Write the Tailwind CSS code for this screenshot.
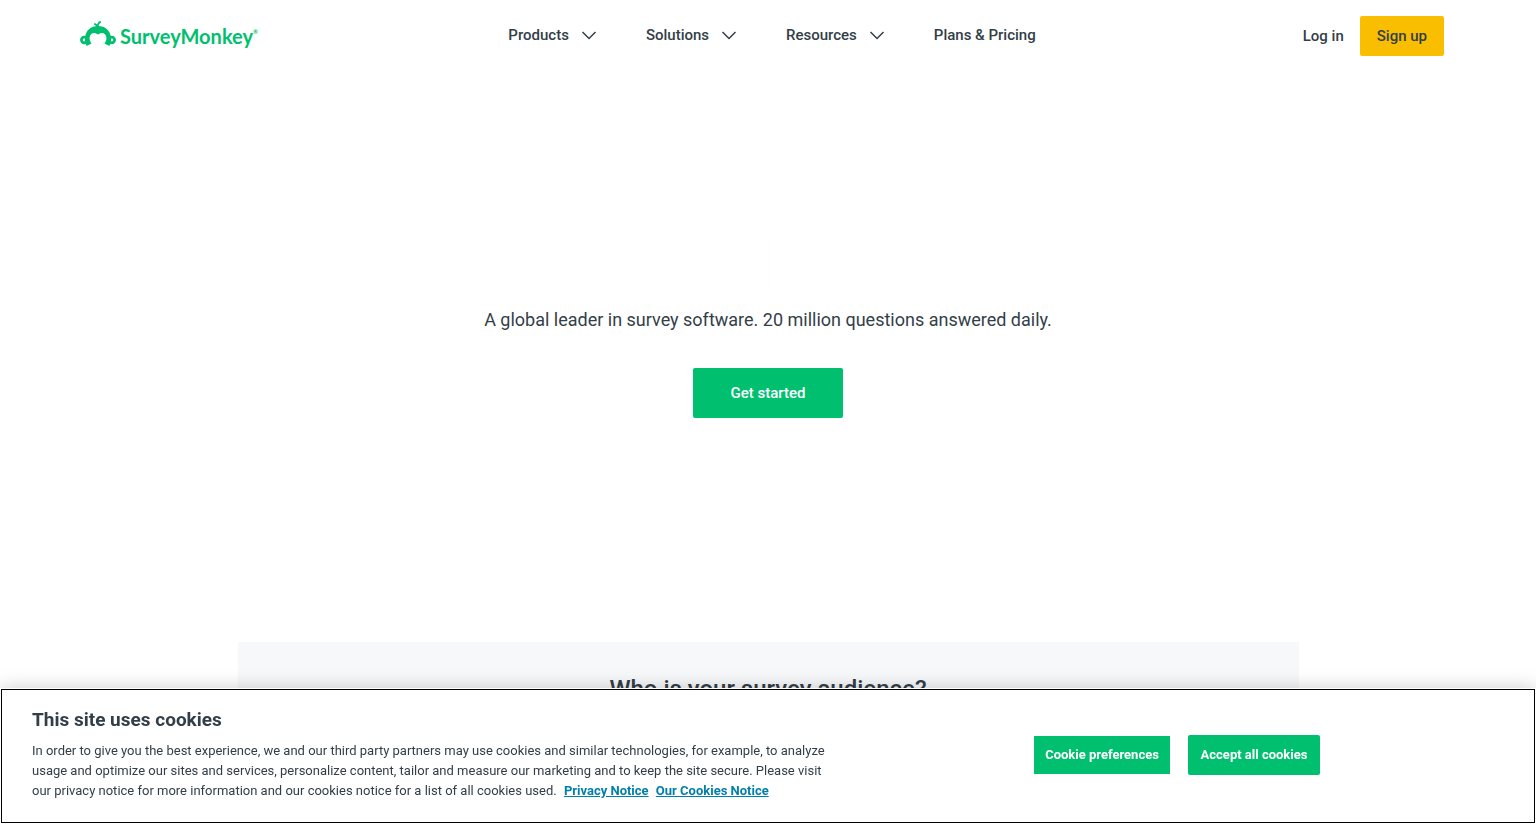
<!DOCTYPE html>
<html lang="en">
  <head>
    <meta charset="UTF-8" />
    <meta name="viewport" content="width=device-width, initial-scale=1.0" />
    <title>SurveyMonkey</title>
    <script src="https://cdn.jsdelivr.net/npm/@tailwindcss/browser@4"></script>
  </head>
  <body class="bg-white font-[Roboto,sans-serif] text-[#333e48]">
    <header class="flex items-start pt-4 pl-20 pr-[92px] text-[15px] leading-5 font-medium">
      <div class="flex-1 pt-1">
        <a href="#" class="flex items-center gap-1 text-[#00bf6f]">
          <svg class="h-8 w-9" viewBox="0 0 36 32" fill="none" aria-hidden="true">
            <path d="M5 18.500C5.200 10.500 11 6 18 6S30.800 10.500 31 18.500C31.200 21 30.500 23.800 29.300 26L24.500 23.600C25.800 21.500 26.600 19.500 26.400 17.500C26 12.800 21.500 11.500 18 14.500C14.500 11.500 10 12.800 9.600 17.500C9.400 19.500 10.200 21.500 11.500 23.600L6.700 26C5.500 23.800 4.800 21 5 18.500Z" fill="currentColor" />
            <circle cx="4.200" cy="20" r="2.800" stroke="currentColor" stroke-width="2.700" />
            <circle cx="31.800" cy="20" r="2.800" stroke="currentColor" stroke-width="2.700" />
            <path d="M17.200 7C17 5.500 16 4.300 14.200 3.900M17.800 7C17.600 4.500 18.500 2.600 20.800 1.600" stroke="currentColor" stroke-width="1.800" />
          </svg>
          <span class="flex items-start font-[Lato,sans-serif] text-[20px] leading-8 font-bold">SurveyMonkey<span class="pt-2 text-[6px] leading-[8px]">®</span></span>
        </a>
      </div>
      <nav class="ml-5 flex items-center gap-[49px] pt-[9px]">
        <button class="flex items-center gap-3">
          Products
          <svg class="h-4 w-4" viewBox="0 0 16 16" fill="none" stroke="currentColor" stroke-width="1.500"><path d="M1.500 5L8 11.500L14.500 5" /></svg>
        </button>
        <button class="flex items-center gap-3">
          Solutions
          <svg class="h-4 w-4" viewBox="0 0 16 16" fill="none" stroke="currentColor" stroke-width="1.500"><path d="M1.500 5L8 11.500L14.500 5" /></svg>
        </button>
        <button class="flex items-center gap-3">
          Resources
          <svg class="h-4 w-4" viewBox="0 0 16 16" fill="none" stroke="currentColor" stroke-width="1.500"><path d="M1.500 5L8 11.500L14.500 5" /></svg>
        </button>
        <a href="#">Plans &amp; Pricing</a>
      </nav>
      <div class="flex flex-1 items-center justify-end gap-4">
        <a href="#">Log in</a>
        <a href="#" class="rounded-xs bg-[#f9be00] px-[17px] py-[10px]">Sign up</a>
      </div>
    </header>

    <main>
      <section class="flex flex-col items-center pt-[184px]">
        <div class="h-12 w-px bg-[#fdfdfd]"></div>
        <p class="mt-5 text-[18px] leading-6">A global leader in survey software. 20 million questions answered daily.</p>
        <button class="mt-9 rounded-xs bg-[#00bf6f] px-[38px] py-[15px] text-[15px] leading-5 font-medium text-white">Get started</button>
      </section>
      <section class="mx-auto mt-56 h-44 w-[1061px] max-w-full bg-[#f7f8fa] pt-[31px] text-center">
        <h2 class="text-[24px] leading-8 font-medium">Who is your survey audience?</h2>
      </section>
    </main>

    <div role="dialog" aria-label="This site uses cookies" class="fixed inset-x-0 bottom-0 flex items-start bg-white px-8 pt-5 pb-[23px] shadow-[0_0_18px_rgba(0,0,0,0.2)] outline-1 -outline-offset-2 outline-black">
      <div class="w-[820px]">
        <h2 class="text-[19px] leading-6 font-bold">This site uses cookies</h2>
        <p class="mt-[9px] text-[13px] leading-5">
          In order to give you the best experience, we and our third party partners may use cookies and similar technologies, for example, to analyze<br />
          usage and optimize our sites and services, personalize content, tailor and measure our marketing and to keep the site secure. Please visit<br />
          our privacy notice for more information and our cookies notice for a list of all cookies used.
          <a href="#" class="ml-1 font-bold text-[#007faa] underline">Privacy Notice</a>
          <a href="#" class="ml-1 font-bold text-[#007faa] underline">Our Cookies Notice</a>
        </p>
      </div>
      <div class="ml-auto flex items-center gap-[18px] self-center pr-[184px] text-[13px] leading-5 font-bold text-white">
        <button class="w-[136px] bg-[#00bf6f] py-[9px]">Cookie preferences</button>
        <button class="w-[132px] rounded-xs bg-[#00bf6f] py-[10px]">Accept all cookies</button>
      </div>
    </div>
  </body>
</html>
